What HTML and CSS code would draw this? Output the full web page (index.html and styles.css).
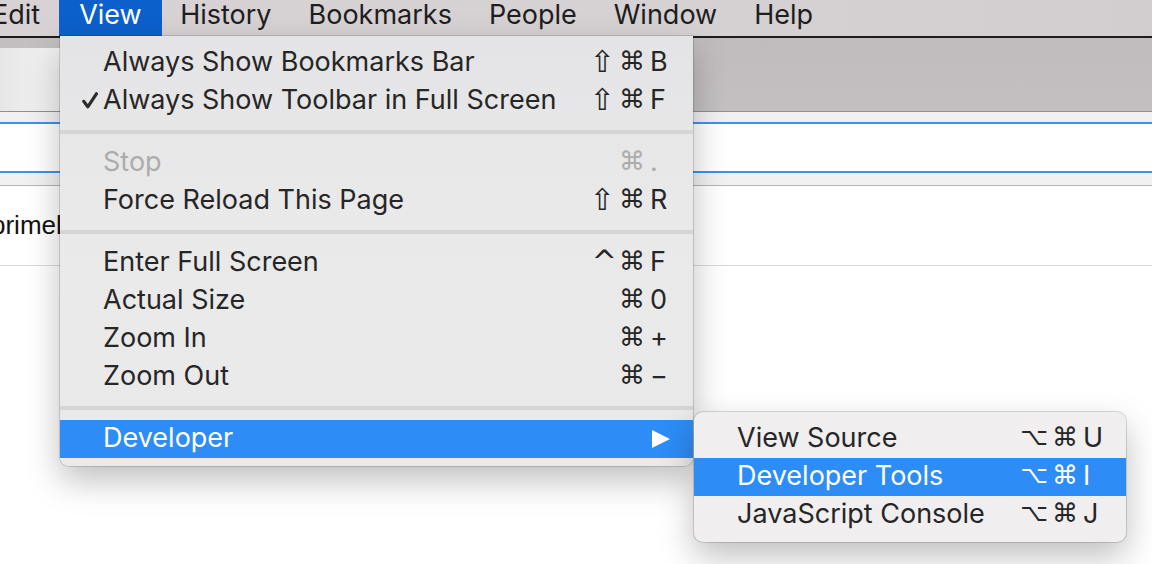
FILE: index.html
```html
<!DOCTYPE html>
<html>
<head>
<meta charset="utf-8">
<link rel="stylesheet" href="styles.css">
</head>
<body>
<div class="screen">
  <div class="menubar">
    <div class="mb-item mb-first">Edit</div>
    <div class="mb-item mb-active">View</div>
    <div class="mb-item">History</div>
    <div class="mb-item">Bookmarks</div>
    <div class="mb-item">People</div>
    <div class="mb-item">Window</div>
    <div class="mb-item">Help</div>
  </div>
  <div class="darkline"></div>
  <div class="toolbar">
    <div class="tab"></div>
    <div class="toolbar-rest"></div>
  </div>
  <div class="tb-border"></div>
  <div class="strip"></div>
  <div class="blue"></div>
  <div class="field"></div>
  <div class="blue"></div>
  <div class="strip strip2"></div>
  <div class="content">
    <div class="row-text">primel</div>
  </div>

  <div class="menu main-menu">
    <div class="item"><span class="check"></span><span class="label">Always Show Bookmarks Bar</span><span class="mods"><span class="shift">⇧</span>⌘</span><span class="key">B</span></div>
    <div class="item"><span class="check"><svg width="16" height="17" viewBox="0 0 16 17"><path d="M1.8 9.4 L5.8 14.8 L14.4 1.8" fill="none" stroke="#2b2b2b" stroke-width="3.2" stroke-linecap="round" stroke-linejoin="round"/></svg></span><span class="label">Always Show Toolbar in Full Screen</span><span class="mods"><span class="shift">⇧</span>⌘</span><span class="key">F</span></div>
    <div class="sep"></div>
    <div class="item disabled"><span class="check"></span><span class="label">Stop</span><span class="mods">⌘</span><span class="key">.</span></div>
    <div class="item"><span class="check"></span><span class="label">Force Reload This Page</span><span class="mods"><span class="shift">⇧</span>⌘</span><span class="key">R</span></div>
    <div class="sep"></div>
    <div class="item"><span class="check"></span><span class="label">Enter Full Screen</span><span class="mods"><span class="ctrl">^</span>⌘</span><span class="key">F</span></div>
    <div class="item"><span class="check"></span><span class="label">Actual Size</span><span class="mods">⌘</span><span class="key">0</span></div>
    <div class="item"><span class="check"></span><span class="label">Zoom In</span><span class="mods">⌘</span><span class="key">+</span></div>
    <div class="item"><span class="check"></span><span class="label">Zoom Out</span><span class="mods">⌘</span><span class="key">−</span></div>
    <div class="sep"></div>
    <div class="item selected"><span class="check"></span><span class="label">Developer</span><span class="mods"></span><span class="key"><svg class="arrow" width="18" height="18" viewBox="0 0 18 18"><path d="M0 0 L18 9 L0 18 Z" fill="#ffffff"/></svg></span></div>
  </div>

  <div class="menu sub-menu">
    <div class="item"><span class="check"></span><span class="label">View Source</span><span class="mods"><span class="opt">⌥</span>⌘</span><span class="key">U</span></div>
    <div class="item selected"><span class="check"></span><span class="label">Developer Tools</span><span class="mods"><span class="opt">⌥</span>⌘</span><span class="key">I</span></div>
    <div class="item"><span class="check"></span><span class="label">JavaScript Console</span><span class="mods"><span class="opt">⌥</span>⌘</span><span class="key">J</span></div>
  </div>
</div>
</body>
</html>
```

FILE: styles.css
```css
html, body {
  margin: 0;
  padding: 0;
  background: #ffffff;
}
.screen {
  position: relative;
  width: 1152px;
  height: 564px;
  overflow: hidden;
  font-family: "Inter", "DejaVu Sans", sans-serif;
  color: #262626;
}
.menubar {
  height: 36px;
  display: flex;
  align-items: flex-start;
  background: linear-gradient(90deg, #d8d2d4 0%, #d6d1d3 60%, #d2cdcf 100%);
  font-size: 27px;
  color: #1e1e1e;
  margin-left: -27px;
}
.mb-item {
  height: 36px;
  line-height: 30px;
  padding: 0 18.5px;
  box-sizing: border-box;
}
.mb-first {
  padding: 0 19px;
}
.mb-active {
  background: #0c60cb;
  color: #ffffff;
  padding: 0 20px;
}
.darkline {
  height: 2px;
  background: #1d1b1c;
}
.toolbar {
  height: 73px;
  display: flex;
  background: #c3bfc0;
}
.tab {
  width: 60px;
  margin-top: 10px;
  background: linear-gradient(90deg, #e6e6e6, #f4f4f4);
}
.toolbar-rest {
  flex: 1;
  background: linear-gradient(180deg, #c0bcbd, #c4c0c1);
}
.tb-border {
  height: 1px;
  background: #8f8f8f;
}
.strip {
  height: 10px;
  background: #f1f1f1;
}
.strip2 {
  height: 12px;
  border-bottom: 1px solid #b4b4b4;
}
.blue {
  height: 2px;
  background: #3f91ea;
}
.field {
  height: 47px;
  background: #ffffff;
}
.content {
  height: 79px;
  border-bottom: 1px solid #dadada;
  display: flex;
  align-items: center;
}
.row-text {
  font-size: 26px;
  color: #111111;
  margin-left: -9px;
  font-family: "Liberation Sans", "Inter", sans-serif;
}

.menu {
  position: absolute;
  box-sizing: border-box;
  padding: 8px 0;
  background: #ebeaeb;
  box-shadow: 0 0 0 1px rgba(0, 0, 0, 0.14), 0 14px 34px rgba(0, 0, 0, 0.26);
  font-size: 27px;
}
.main-menu {
  left: 60px;
  top: 36px;
  width: 633px;
  border-radius: 0 0 9px 9px;
  background: linear-gradient(180deg, #e4e3e5 0%, #eae9ea 40%, #ebeaeb 100%);
}
.sub-menu {
  left: 694px;
  top: 412px;
  width: 432px;
  border-radius: 9px;
  background: #f0eeef;
}
.item {
  height: 38px;
  box-sizing: border-box;
  padding-bottom: 4px;
  display: flex;
  align-items: center;
  padding-right: 21px;
}
.check {
  width: 43px;
  flex: none;
  display: flex;
  align-items: center;
  padding-left: 22px;
  padding-top: 2px;
  box-sizing: border-box;
}
.label {
  flex: 1;
  white-space: nowrap;
}
.mods {
  display: flex;
  align-items: center;
  padding-right: 2px;
  font-family: "DejaVu Sans", sans-serif;
  font-size: 26px;
  letter-spacing: 3px;
}
.shift {
  font-size: 30px;
  letter-spacing: 4px;
}
.ctrl {
  font-size: 30px;
  letter-spacing: 2px;
}
.opt {
  font-size: 24px;
  letter-spacing: 4px;
}
.key {
  width: 22px;
  flex: none;
  display: flex;
  align-items: center;
}
.disabled {
  color: #acacac;
}
.selected {
  background: #2d8cf6;
  color: #ffffff;
}
.arrow {
  margin-left: 2px;
  margin-top: 4px;
}
.sep {
  height: 24px;
  display: flex;
  align-items: center;
}
.sep::before {
  content: "";
  display: block;
  width: 100%;
  height: 4px;
  background: #d6d5d6;
}
```
